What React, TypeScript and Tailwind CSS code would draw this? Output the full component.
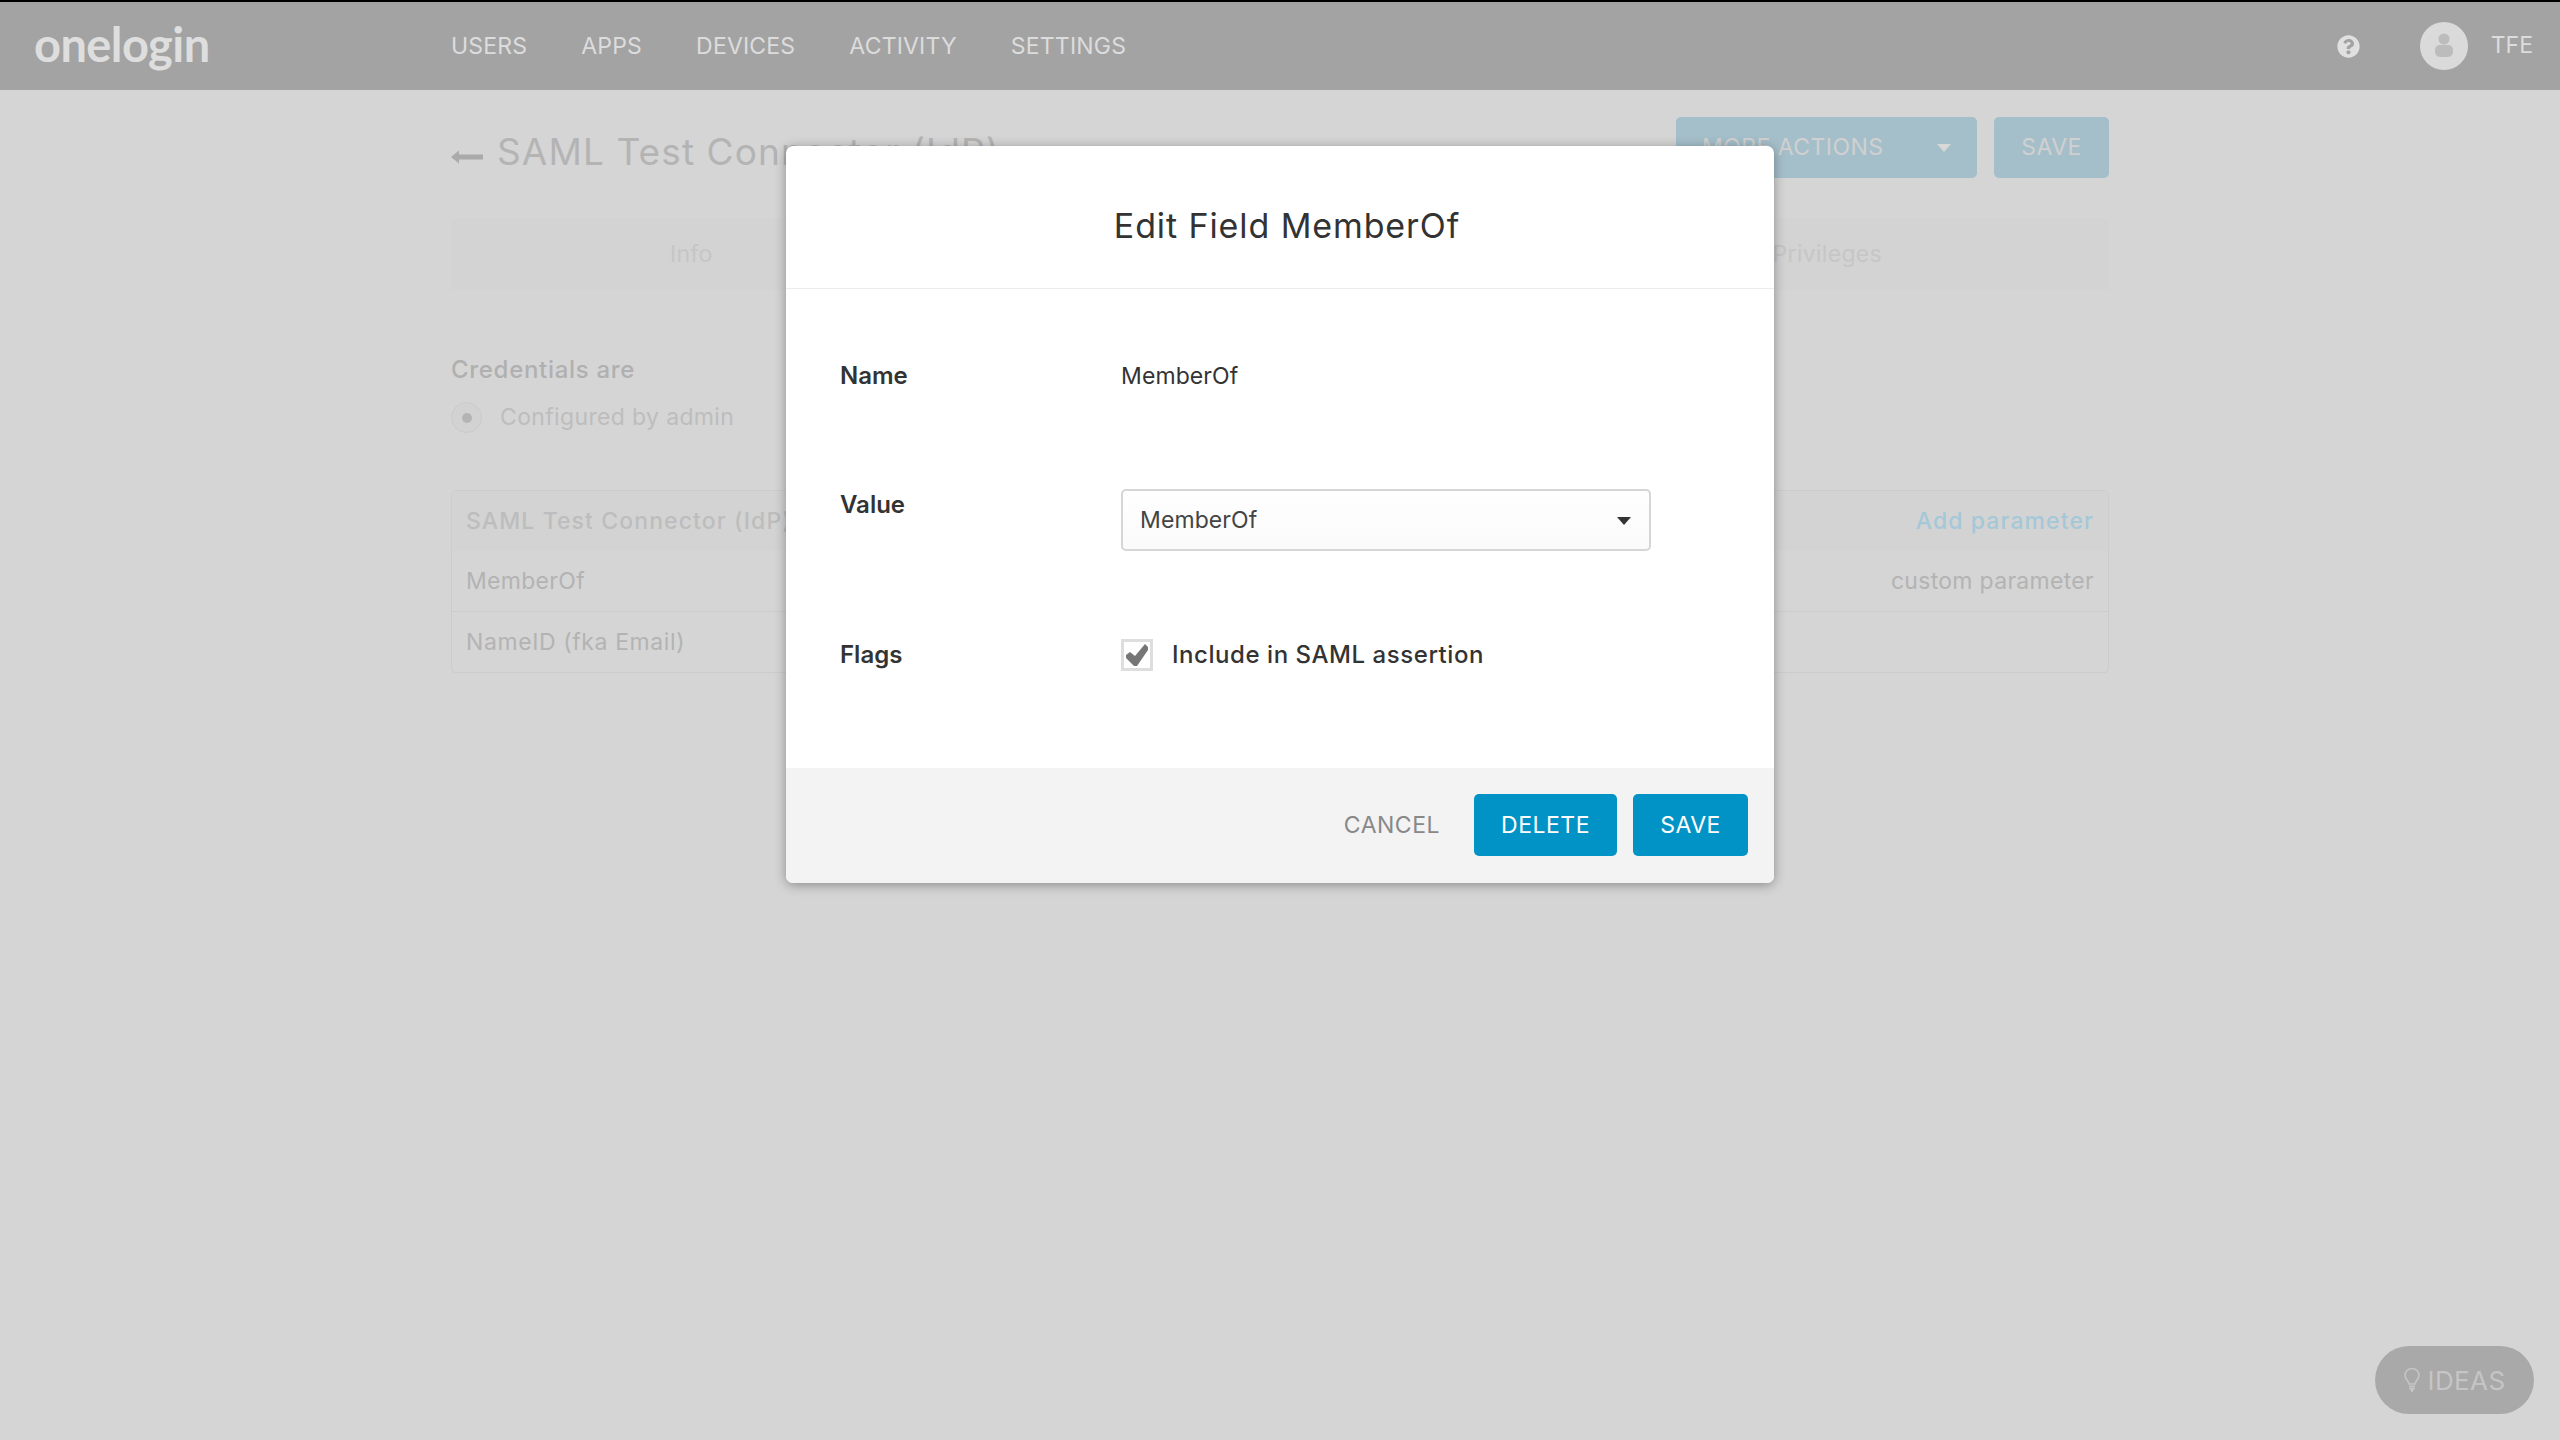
import { FaQuestionCircle } from 'react-icons/fa';

const navItems = ['USERS', 'APPS', 'DEVICES', 'ACTIVITY', 'SETTINGS'];

function Caret({ className }: { className: string }) {
  return (
    <svg width="14" height="8" viewBox="0 0 14 8" className={className}>
      <path d="M0 0H14L7 8Z" fill="currentColor" />
    </svg>
  );
}

function Background() {
  return (
    <div className="mx-auto w-[1658px] pt-[27px]">
      {/* Title row */}
      <div className="flex h-[61px] justify-between">
        <div className="flex items-center pt-[8px]">
          <svg width="32" height="14" viewBox="0 0 32 14" className="mt-[11px] text-[#aaaaaa]">
            <path d="M0 7L8 0.5V4.5H32V9.5H8V13.5Z" fill="currentColor" />
          </svg>
          <h1 className="ml-[14px] text-[37px] tracking-[1.1px] text-[#b4b4b4]">SAML Test Connector (IdP)</h1>
        </div>
        <div className="flex gap-[17px]">
          <div className="flex w-[301px] items-center rounded-[5px] bg-[#a5bfca] pl-[26px] pr-[26px] text-[23px] tracking-[0.45px] text-[#d0d0d0]">
            MORE ACTIONS
            <Caret className="ml-auto text-[#d8d8d8]" />
          </div>
          <div className="flex w-[115px] items-center justify-center rounded-[5px] bg-[#a5bfca] text-[23px] tracking-[0.4px] text-[#d0d0d0]">
            SAVE
          </div>
        </div>
      </div>

      {/* Tabs */}
      <div className="mt-[41px] flex h-[71px] items-center justify-between bg-[#d3d3d3] pl-[219px] pr-[227px] text-[23px] tracking-[0.3px] text-[#c6c6c6]">
        <span>Info</span>
        <span>Privileges</span>
      </div>

      <div className="mt-[65px] text-[24px] leading-[30px] font-medium tracking-[0.7px] text-[#b0b0b0]">Credentials are</div>
      <div className="mt-[17px] flex h-[31px] items-center">
        <div className="flex h-[31px] w-[31px] items-center justify-center rounded-full border border-[#cbcbcb] bg-[#d2d2d2]">
          <div className="h-[10px] w-[10px] rounded-full bg-[#b4b4b4]" />
        </div>
        <span className="ml-[18px] text-[23px] tracking-[0.35px] text-[#bdbdbd]">Configured by admin</span>
      </div>

      {/* Parameters table */}
      <div className="mt-[57px] rounded-[5px] border border-[#cccccc] text-[23px]">
        <div className="flex h-[60px] items-center justify-between bg-[#d3d3d3] px-[14px] font-medium tracking-[1.1px] text-[#bdbdbd]">
          <span>SAML Test Connector (IdP)</span>
          <span className="text-[#a4c8d8]">Add parameter</span>
        </div>
        <div className="flex h-[61px] items-center justify-between border-b border-[#cccccc] px-[14px] tracking-[0.3px] text-[#b3b3b3]">
          <span>MemberOf</span>
          <span>custom parameter</span>
        </div>
        <div className="flex h-[60px] items-center px-[14px] tracking-[0.6px] text-[#b3b3b3]">NameID (fka Email)</div>
      </div>
    </div>
  );
}

function Modal() {
  return (
    <div className="absolute left-[786px] top-[146px] w-[988px] overflow-hidden rounded-[7px] bg-white shadow-[0_2px_12px_rgba(0,0,0,0.35)]">
      <div className="flex h-[143px] items-center justify-center border-b border-[#ececec] pl-[14px] pt-[16px] text-[34px] tracking-[0.9px] text-[#333333]">
        Edit Field MemberOf
      </div>
      <div className="h-[479px] pl-[54px] pt-[72px] text-[23px] leading-[30px] text-[#333333]">
        <div className="flex">
          <div className="w-[281px] text-[24px] font-semibold">Name</div>
          <div className="tracking-[0.1px]">MemberOf</div>
        </div>
        <div className="mt-[98px] flex">
          <div className="mt-px w-[281px] text-[24px] font-semibold">Value</div>
          <div className="flex h-[62px] w-[530px] items-center justify-between rounded-[5px] border-2 border-[#d6d6d6] bg-[linear-gradient(#ffffff,#fafafa)] pl-[17px] pr-[18px] tracking-[0.1px] text-[#444444]">
            MemberOf
            <Caret className="mt-[2px] text-[#333333]" />
          </div>
        </div>
        <div className="mt-[88px] flex items-center">
          <div className="w-[281px] text-[24px] font-semibold">Flags</div>
          <div className="flex h-[32px] w-[32px] items-center justify-center border-[3px] border-[#dedede] bg-white">
            <svg width="24" height="24" viewBox="0 0 24 24">
              <path d="M1 12L5 9L10 13L20 1L23 4V7L12 23H9L1 15Z" fill="#767676" />
            </svg>
          </div>
          <div className="ml-[19px] text-[24px] font-medium tracking-[0.55px]">Include in SAML assertion</div>
        </div>
      </div>
      <div className="flex h-[115px] items-center justify-end bg-[#f3f3f3] pb-px pr-[26px] text-[23px] tracking-[0.5px]">
        <span className="mr-[34px] text-[#888888]">CANCEL</span>
        <div className="flex h-[62px] w-[143px] items-center justify-center rounded-[5px] bg-[#0293c6] text-white">DELETE</div>
        <div className="ml-[16px] flex h-[62px] w-[115px] items-center justify-center rounded-[5px] bg-[#0293c6] text-white">SAVE</div>
      </div>
    </div>
  );
}

export default function App() {
  return (
    <div className="relative h-[1440px] overflow-hidden bg-[#d5d5d5] font-['Inter',sans-serif]">
      {/* Top nav */}
      <div className="flex h-[90px] items-center border-t-2 border-black bg-[#a3a3a3] text-[#dcdcdc]">
        <div className="w-[451px] pb-[3px] pl-[34px] font-['Lato',sans-serif] text-[47px] leading-none font-bold tracking-[-0.6px] text-[#dedede]">onelogin</div>
        <nav className="flex gap-[54px] text-[23px] tracking-[0.2px]">
          {navItems.map((item) => (
            <span key={item}>{item}</span>
          ))}
        </nav>
        <div className="ml-auto flex items-center pr-[27px]">
          <FaQuestionCircle size={23} className="text-[#e0e0e0]" />
          <div className="ml-[60px] flex h-[48px] w-[48px] items-center justify-center rounded-full bg-[#dadada]">
            <svg width="20" height="26" viewBox="0 0 20 26" className="text-[#bcbcbc]">
              <circle cx="10" cy="6" r="5.5" fill="currentColor" />
              <rect x="1" y="12" width="18" height="12" rx="5" fill="currentColor" />
            </svg>
          </div>
          <span className="mb-[2px] ml-[23px] text-[23px]">TFE</span>
        </div>
      </div>

      <Background />
      <Modal />

      {/* Ideas pill */}
      <div className="absolute bottom-[26px] right-[26px] flex h-[68px] w-[159px] items-center justify-center gap-[8px] rounded-full bg-[#a9a9a9] text-[26px] tracking-[0.4px] text-[#c5c5c5]">
        <svg width="16" height="24" viewBox="0 0 16 24" fill="none" stroke="currentColor" strokeWidth="1.6">
          <path d="M5 16C4 12 1 11 1 7.5A7 7 0 0 1 15 7.5C15 11 12 12 11 16Z" />
          <path d="M5 18.5H11M5.5 21H10.5M7 23H9" strokeWidth="2" />
        </svg>
        IDEAS
      </div>
    </div>
  );
}
